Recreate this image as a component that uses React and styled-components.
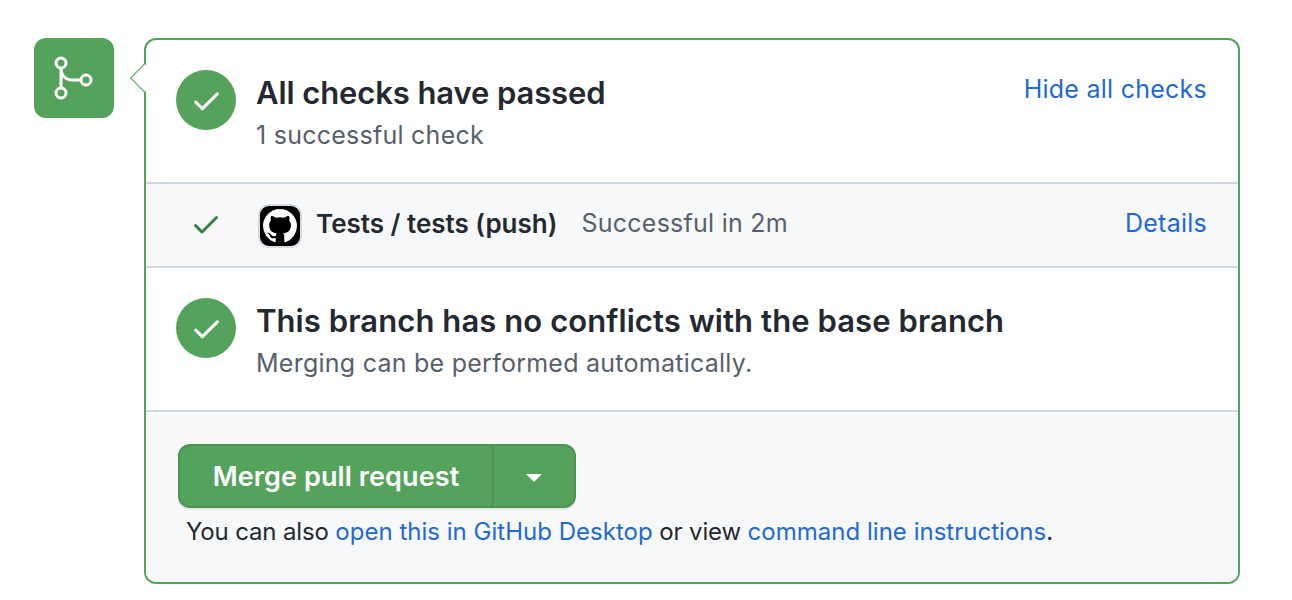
import React from "react";
import styled, { createGlobalStyle } from "styled-components";

const GlobalStyle = createGlobalStyle`
  html, body {
    margin: 0;
    padding: 0;
    background: #fff;
  }
  body {
    font-family: Inter, "Liberation Sans", sans-serif;
    color: #24292f;
  }
`;

const Page = styled.div`
  display: flex;
  align-items: flex-start;
  gap: 30px;
  padding: 38px 52px 0 34px;
  height: 600px;
  box-sizing: border-box;
  overflow: hidden;
`;

const BranchBadge = styled.div`
  width: 80px;
  height: 80px;
  flex: none;
  border-radius: 12px;
  background: #54a25b;
  display: flex;
  align-items: center;
  justify-content: center;
`;

const Box = styled.div`
  position: relative;
  flex: 1;
  border: 2px solid #54a25b;
  border-radius: 12px;
`;

const Pointer = styled.div`
  position: absolute;
  left: -12px;
  top: 28px;
  width: 20px;
  height: 20px;
  box-sizing: border-box;
  background: #fff;
  border-left: 1px solid #54a25b;
  border-bottom: 1px solid #54a25b;
  transform: rotate(45deg);
`;

const Section = styled.div`
  display: flex;
  align-items: flex-start;
  justify-content: space-between;
  height: 144px;
  box-sizing: border-box;
  padding: 30px 31px 0 30px;
  border-bottom: 2px solid #d0d7de;
`;

const Lead = styled.div`
  display: flex;
  gap: 20px;
`;

const StatusCircle = styled.div`
  width: 60px;
  height: 60px;
  flex: none;
  border-radius: 50%;
  background: #54a25b;
  display: flex;
  align-items: center;
  justify-content: center;
`;

const Title = styled.div`
  font-size: 31px;
  line-height: 40px;
  font-weight: 600;
  letter-spacing: ${(p) => p.$spacing}px;
  color: #24292f;
  margin-top: 3px;
`;

const Subtitle = styled.div`
  font-size: 25px;
  letter-spacing: 0.25px;
  line-height: 32px;
  color: #57606a;
  margin-top: 6px;
`;

const TextLink = styled.a`
  color: #2269d6;
  text-decoration: none;
`;

const ActionLink = styled(TextLink)`
  font-size: 25px;
  letter-spacing: 0.25px;
  margin-top: ${(p) => p.$top || 0}px;
`;

const HintLink = styled(TextLink)`
  letter-spacing: 0.02px;
`;

const CheckRow = styled.div`
  display: flex;
  align-items: center;
  height: 84px;
  box-sizing: border-box;
  padding: 0 31px 4px 44px;
  background: #f6f8fa;
  border-bottom: 2px solid #d0d7de;
`;

const AppAvatar = styled.div`
  width: 44px;
  height: 44px;
  margin: 4px 0 -2px 36px;
  box-sizing: border-box;
  border: 2px solid #d8dce0;
  border-radius: 11px;
  background: #000;
  display: flex;
  align-items: center;
  justify-content: center;
`;

const CheckIconWrap = styled.span`
  display: flex;
  margin-top: 2px;
`;

const CheckName = styled.strong`
  font-size: 26px;
  font-weight: 600;
  color: #24292f;
  margin-left: 14px;
`;

const CheckStatus = styled.span`
  font-size: 25px;
  letter-spacing: 0.25px;
  color: #57606a;
  margin-left: 24px;
  flex: 1;
`;

const Footer = styled.div`
  background: #f6f8fa;
  padding: 32px;
  height: 170px;
  box-sizing: border-box;
  border-radius: 0 0 10px 10px;
`;

const ButtonGroup = styled.div`
  display: inline-flex;
  height: 64px;
  box-sizing: border-box;
  border: 2px solid #4c9453;
  border-radius: 12px;
  background: #54a25b;
  box-shadow: 0 2px 0 rgba(27, 31, 36, 0.08);
`;

const MergeButton = styled.button`
  width: 314px;
  border: 0;
  border-right: 2px solid #4c9453;
  background: none;
  color: #fff;
  font-family: inherit;
  font-size: 27px;
  letter-spacing: 0.1px;
  font-weight: 600;
  padding: 0;
`;

const CaretButton = styled.button`
  width: 80px;
  border: 0;
  background: none;
  display: flex;
  align-items: center;
  justify-content: center;
  padding: 4px 0 0;
`;

const Caret = styled.span`
  width: 0;
  height: 0;
  border-left: 8px solid transparent;
  border-right: 8px solid transparent;
  border-top: 8px solid #fff;
`;

const Hint = styled.p`
  margin: 8px 0 0 8px;
  font-size: 24px;
  letter-spacing: -0.15px;
  line-height: 32px;
  color: #24292f;
`;

function Check({ size, color }) {
  return (
    <svg width={size} height={size} viewBox="0 0 16 16" fill={color}>
      <path d="M13.78 4.22a.75.75 0 0 1 0 1.06l-7.25 7.25a.75.75 0 0 1-1.06 0L2.22 9.28a.75.75 0 0 1 1.06-1.06L6 10.94l6.72-6.72a.75.75 0 0 1 1.06 0Z" />
    </svg>
  );
}

function MergeIcon() {
  return (
    <svg width="40" height="44" viewBox="0 0 40 44" fill="none" stroke="#fff" strokeWidth="3">
      <circle cx="7" cy="7" r="5" />
      <circle cx="7" cy="37" r="5" />
      <circle cx="32" cy="24" r="5" />
      <path d="M7 12v20M7 14c1 6 5 10 11 10h9" />
    </svg>
  );
}

function GithubMark() {
  return (
    <svg width="34" height="34" viewBox="0 0 16 16" fill="#fff">
      <path d="M8 0c4.42 0 8 3.58 8 8a8.013 8.013 0 0 1-5.45 7.59c-.4.08-.55-.17-.55-.38 0-.27.01-1.13.01-2.2 0-.75-.25-1.23-.54-1.48 1.78-.2 3.65-.88 3.65-3.95 0-.88-.31-1.59-.82-2.15.08-.2.36-1.02-.08-2.12 0 0-.67-.22-2.2.82-.64-.18-1.32-.27-2-.27-.68 0-1.36.09-2 .27-1.53-1.03-2.2-.82-2.2-.82-.44 1.1-.16 1.92-.08 2.12-.51.56-.82 1.28-.82 2.15 0 3.06 1.86 3.75 3.64 3.95-.23.2-.44.55-.51 1.07-.46.21-1.61.55-2.33-.66-.15-.24-.6-.83-1.23-.82-.67.01-.27.38.01.53.34.19.73.9.82 1.13.16.45.68 1.31 2.69.94 0 .67.01 1.3.01 1.49 0 .21-.15.45-.55.38A7.995 7.995 0 0 1 0 8c0-4.42 3.58-8 8-8Z" />
    </svg>
  );
}

export default function App() {
  return (
    <>
      <GlobalStyle />
      <Page>
        <BranchBadge>
          <MergeIcon />
        </BranchBadge>
        <Box>
          <Pointer />
          <Section>
            <Lead>
              <StatusCircle>
                <Check size={33} color="#fff" />
              </StatusCircle>
              <div>
                <Title $spacing={-0.1}>All checks have passed</Title>
                <Subtitle>1 successful check</Subtitle>
              </div>
            </Lead>
            <ActionLink href="#" $top={4}>Hide all checks</ActionLink>
          </Section>
          <CheckRow>
            <CheckIconWrap>
              <Check size={32} color="#3a7d44" />
            </CheckIconWrap>
            <AppAvatar>
              <GithubMark />
            </AppAvatar>
            <CheckName>Tests / tests (push)</CheckName>
            <CheckStatus>Successful in 2m</CheckStatus>
            <ActionLink href="#">Details</ActionLink>
          </CheckRow>
          <Section>
            <Lead>
              <StatusCircle>
                <Check size={33} color="#fff" />
              </StatusCircle>
              <div>
                <Title $spacing={0.08}>This branch has no conflicts with the base branch</Title>
                <Subtitle>Merging can be performed automatically.</Subtitle>
              </div>
            </Lead>
          </Section>
          <Footer>
            <ButtonGroup>
              <MergeButton>Merge pull request</MergeButton>
              <CaretButton aria-label="Select merge method">
                <Caret />
              </CaretButton>
            </ButtonGroup>
            <Hint>
              You can also <HintLink href="#">open this in GitHub Desktop</HintLink> or view{" "}
              <HintLink href="#">command line instructions</HintLink>.
            </Hint>
          </Footer>
        </Box>
      </Page>
    </>
  );
}
